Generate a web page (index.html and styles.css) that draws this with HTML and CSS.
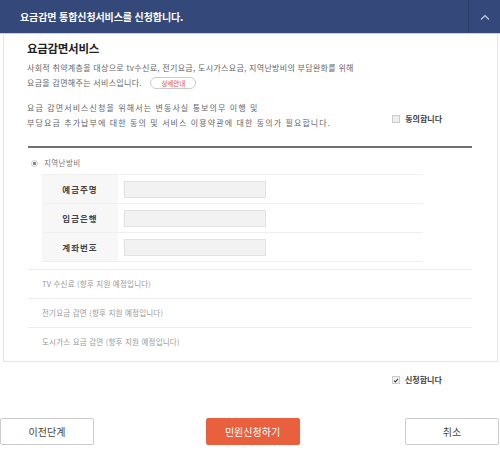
FILE: index.html
```html
<!DOCTYPE html>
<html lang="ko">
<head>
    <meta charset="UTF-8">
    <meta name="viewport" content="width=device-width, initial-scale=1.0">
    <title>요금감면 통합신청서비스</title>
    <link rel="stylesheet" href="styles.css">
</head>
<body>
    <div class="apply-head">
        <h2>요금감면 통합신청서비스를 신청합니다.</h2>
        <button class="fold" type="button">
            <svg width="10" height="6" viewBox="0 0 10 6"><path d="M1 5.5 L5 1.5 L9 5.5" fill="none" stroke="#c9cfdd" stroke-width="1.2"/></svg>
        </button>
    </div>

    <div class="apply-body">
        <h3>요금감면서비스</h3>
        <p class="desc">사회적 취약계층을 대상으로 tv수신료, 전기요금, 도시가스요금, 지역난방비의 부담완화를 위해<br>요금을 감면해주는 서비스입니다. <a class="btn-info">상세안내</a></p>

        <div class="agree-row">
            <p class="desc desc-wide">요금 감면서비스신청을 위해서는 변동사실 통보의무 이행 및<br>부당요금 추가납부에 대한 동의 및 서비스 이용약관에 대한 동의가 필요합니다.</p>
            <label class="check"><span class="box"></span>동의합니다</label>
        </div>

        <div class="service-list">
            <div class="service service-on">
                <label class="radio"><span class="dot"></span>지역난방비</label>
                <table class="account">
                    <tr><th>예금주명</th><td><input type="text"></td></tr>
                    <tr><th>입금은행</th><td><input type="text"></td></tr>
                    <tr><th>계좌번호</th><td><input type="text"></td></tr>
                </table>
            </div>
            <div class="service">TV 수신료 (향후 지원 예정입니다)</div>
            <div class="service">전기요금 감면 (향후 지원 예정입니다)</div>
            <div class="service">도시가스 요금 감면 (향후 지원 예정입니다)</div>
        </div>
    </div>

    <div class="apply-check">
        <label class="check">
            <span class="box box-on">
                <svg width="7" height="7" viewBox="0 0 7 7"><path d="M1.2 3.6 L2.8 5.2 L5.8 1.6" fill="none" stroke="#333" stroke-width="1.2"/></svg>
            </span>신청합니다
        </label>
    </div>

    <div class="btn-area">
        <button class="btn" type="button">이전단계</button>
        <button class="btn btn-primary" type="button">민원신청하기</button>
        <button class="btn" type="button">취소</button>
    </div>
</body>
</html>
```

FILE: styles.css
```css
body {
    font-family: "Noto Sans CJK KR", "Noto Sans", sans-serif;
    background-color: #fff;
    color: #555;
    margin: 0;
    width: 500px;
}

.apply-head {
    display: flex;
    align-items: center;
    height: 33px;
    padding-left: 20px;
    background-color: #34497a;
    border-bottom: 1px solid #c9cddc;
}

.apply-head h2 {
    flex: 1;
    margin: 0;
    font-size: 10px;
    font-weight: bold;
    color: #fff;
    letter-spacing: -0.1px;
}

.fold {
    display: flex;
    align-items: center;
    justify-content: center;
    width: 32px;
    height: 33px;
    padding: 0;
    background: none;
    border: none;
    border-left: 1px solid #2c3f69;
}

.apply-body {
    margin: 0 2px 0 3px;
    padding: 6px 25px 5px 23px;
    border: 1px solid #e6e6e6;
    border-top: none;
}

.apply-body h3 {
    margin: 0;
    font-size: 11.5px;
    line-height: 16px;
    font-weight: bold;
    color: #222;
    letter-spacing: -0.3px;
}

.desc {
    margin: 4px 0 0;
    font-size: 8px;
    line-height: 15px;
    color: #666;
    letter-spacing: 0.3px;
}

.desc-wide {
    letter-spacing: 1.1px;
}

.btn-info {
    display: inline-block;
    margin-left: 6px;
    padding: 0 10px;
    line-height: 10px;
    font-size: 6.5px;
    letter-spacing: 0;
    color: #e0403a;
    border: 1px solid #ccc;
    border-radius: 6px;
}

.agree-row {
    display: flex;
    align-items: flex-end;
    justify-content: space-between;
    margin-top: 10px;
    padding-right: 30px;
}

.agree-row .desc {
    margin: 0;
}

.check {
    display: flex;
    align-items: center;
    font-size: 8px;
    line-height: 12px;
    font-weight: bold;
    color: #444;
    margin-bottom: 5px;
}

.box {
    display: inline-flex;
    align-items: center;
    justify-content: center;
    width: 6px;
    height: 6px;
    margin-right: 5px;
    background-color: #eee;
    border: 1px solid #ccc;
}

.service-list {
    margin: 16px 0 0 1px;
    border-top: 2px solid #707070;
}

.service {
    height: 28px;
    line-height: 28px;
    padding-left: 14px;
    border-top: 1px solid #ececec;
    font-size: 7.5px;
    color: #999;
    letter-spacing: 0.2px;
}

.service-on {
    height: auto;
    line-height: normal;
    padding: 9px 0 7px;
    border-top: none;
    letter-spacing: 0;
}

.radio {
    display: flex;
    align-items: center;
    padding-left: 3px;
    font-size: 7.5px;
    line-height: 12px;
    color: #777;
    letter-spacing: 0.4px;
}

.dot {
    width: 5px;
    height: 5px;
    margin-right: 6px;
    border: 1px solid #ccc;
    border-radius: 50%;
    background: radial-gradient(circle, #888 40%, #fff 50%);
}

.account {
    width: 381px;
    margin: 5px 0 0 14px;
    border-collapse: collapse;
    border-top: 1px solid #efefef;
}

.account tr {
    border-bottom: 1px solid #efefef;
}

.account th {
    width: 76px;
    height: 28px;
    padding: 0;
    background-color: #f7f7f7;
    font-size: 8.5px;
    font-weight: bold;
    color: #444;
    letter-spacing: 1px;
}

.account td {
    padding: 0 0 0 6px;
}

.account input {
    display: block;
    width: 142px;
    height: 17px;
    box-sizing: border-box;
    background-color: #f2f2f2;
    border: 1px solid #e2e2e2;
}

.apply-check {
    display: flex;
    margin-top: 12px;
    padding-left: 392px;
}

.box-on {
    background-color: #f4f4f4;
}

.btn-area {
    display: flex;
    justify-content: space-between;
    margin-top: 27px;
    padding-right: 1px;
}

.btn {
    width: 94px;
    height: 27px;
    padding: 0;
    font-family: inherit;
    font-size: 10px;
    color: #444;
    background-color: #fff;
    border: 1px solid #ccc;
    border-radius: 2px;
}

.btn-primary {
    margin-left: 6px;
    color: #fff;
    background-color: #e8603e;
    border-color: #e8603e;
}
```
